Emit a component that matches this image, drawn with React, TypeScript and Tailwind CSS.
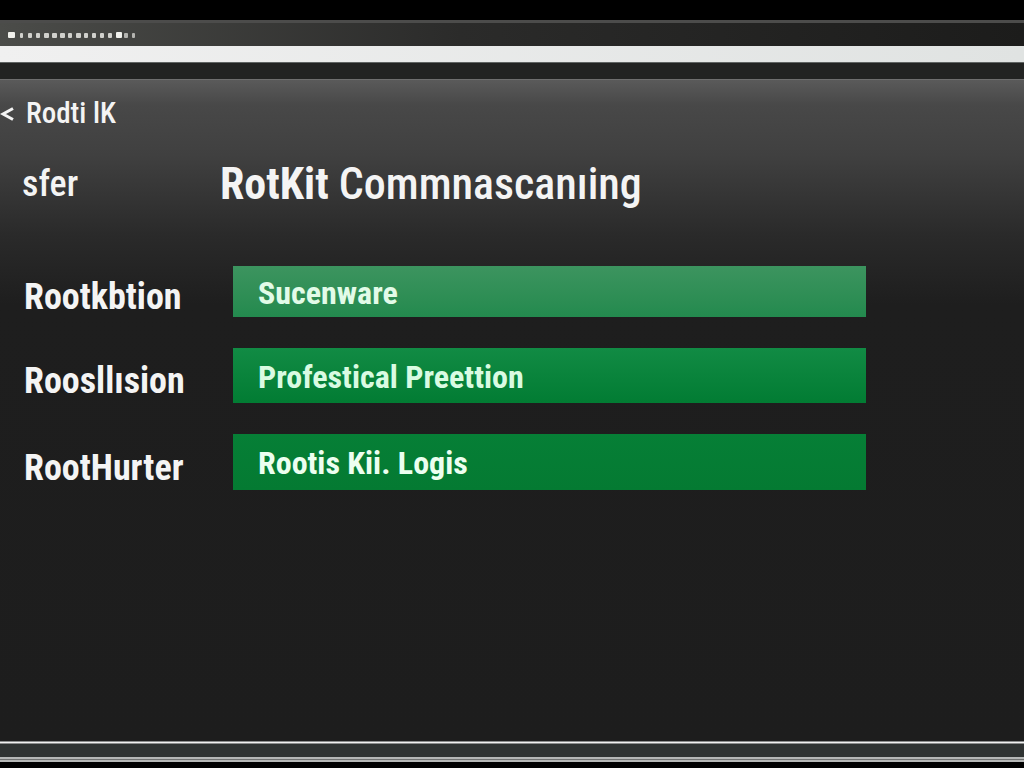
import clsx from "clsx";

interface IScanRow {
  label: string;
  value: string;
  tone: string;
}

const rows: IScanRow[] = [
  { label: "Rootkbtion", value: "Sucenware", tone: "h-[51px] from-[#3c945f] to-[#238a4e] text-[#e2fbe8]" },
  { label: "Roosllısion", value: "Profestical Preettion", tone: "h-[55px] from-[#118b44] to-[#027c33] text-[#d9fbe2]" },
  { label: "RootHurter", value: "Rootis Kii. Logis", tone: "h-14 from-[#067f36] to-[#047a32] text-[#ecfff0]" },
];

const ticks = [7, 3, 4, 4, 5, 5, 5, 4, 5, 4, 4, 4, 4, 6, 4, 3];

const TopBar = () => (
  <header>
    <div className="h-5 bg-black" />
    <div className="h-[26px] border-t-3 border-[#4c4c4b] bg-linear-to-r from-[#4b4c49] via-[#2b2b2a] via-45% to-[#1c1c1b] px-2 flex items-center">
      <svg width="132" height="8" viewBox="0 0 132 8" aria-hidden="true">
        {ticks.map((w, i) => (
          <rect
            key={i}
            x={i === 0 ? 0 : 4 + i * 8}
            y={i === 0 || i === 13 ? 1 : 2}
            width={w}
            height={i === 0 || i === 13 ? 6 : 5}
            rx="1"
            fill={i === 0 || i === 13 ? "#f0f0ec" : i > 13 ? "#b4b4b0" : "#d0d0cc"}
          />
        ))}
      </svg>
    </div>
    <div className="h-4 bg-linear-to-r from-[#f0f0f0] to-[#e0e3e2]" />
    <div className="h-[17px] border-t border-[#606463] bg-[#222322]" />
  </header>
);

const Footer = () => (
  <footer className="bg-black pb-1.5">
    <div className="h-[3px] border-y border-[#8b8d8c] bg-[#f0f0f0]" />
    <div className="h-[13px] bg-[#2f3332]" />
    <div className="h-[5px] border-y-2 border-[#b5b7b6] bg-[#707271]" />
  </footer>
);

export default function App() {
  return (
    <div className="flex min-h-screen flex-col bg-[#1d1d1d] font-['Roboto_Condensed','Roboto',sans-serif] text-[#f4f4f4]">
      <TopBar />

      <main className="flex-1 border-t border-[#6e6e6e] bg-[linear-gradient(180deg,#5a5a5a_0px,#484848_25px,#404040_75px,#2a2a2a_155px,#1e1e1e_225px,#1d1d1d_100%)] pt-4">
        <a href="#back" className="flex h-9 w-fit items-center gap-3 text-[29px] font-medium">
          <svg width="14" height="16" viewBox="0 0 14 16" fill="none" stroke="currentColor" strokeWidth="3" aria-hidden="true">
            <path d="M13 2.5L3 8l10 5.5" />
          </svg>
          Rodti lK
        </a>

        <div className="mt-7 grid grid-cols-[198px_1fr] items-center pl-[22px]">
          <span className="text-[36px] leading-12 font-medium">sfer</span>
          <h1 className="text-[44px] leading-12 font-bold whitespace-nowrap">
            RotKit <span className="font-medium">Commnascanıing</span>
          </h1>
        </div>

        <div className="mt-[58px] flex flex-col gap-[31px] pr-[15.4%] pl-6">
          {rows.map((row, i) => (
            <div key={row.label} className="grid grid-cols-[209px_1fr] items-center">
              <label htmlFor={`scan-${i}`} className="pt-[11px] text-[36px] leading-10 font-bold">
                {row.label}
              </label>
              <button
                id={`scan-${i}`}
                type="button"
                className={clsx("bg-linear-to-b px-[25px] pt-0.5 text-left text-[32px] leading-10 font-bold whitespace-nowrap", row.tone)}
              >
                {row.value}
              </button>
            </div>
          ))}
        </div>
      </main>

      <Footer />
    </div>
  );
}
